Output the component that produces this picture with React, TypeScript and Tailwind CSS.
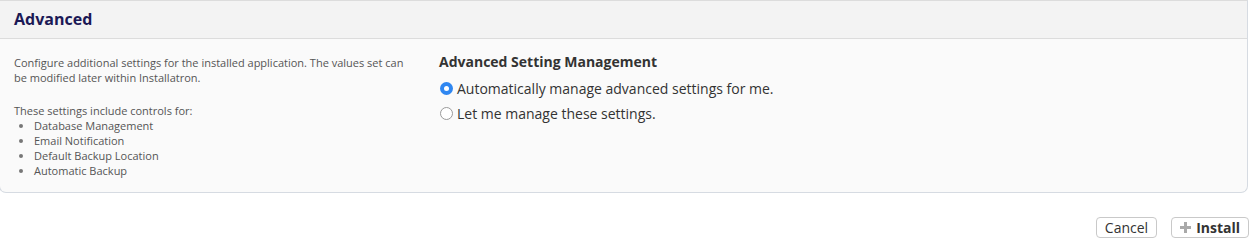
import React from "react";

export default function App() {
  return (
    <div
      className="w-[1256px] h-[248px] bg-white overflow-hidden"
      style={{ fontFamily: '"Open Sans", "Noto Sans", sans-serif' }}
    >
      <div className="w-[1249px] -ml-px border border-[#d6dbe2] border-t-[#dcdcdc] rounded-b-[7px] bg-[#fafafa]">
        <div className="h-[38px] bg-[#f3f3f3] border-b border-[#dcdcdc] pl-[14px] pt-[6px]">
          <h2 className="text-[16px] font-bold text-[#1b1956] leading-[24px]">Advanced</h2>
        </div>
        <div className="flex pb-[14px]">
          <div className="w-[424px] pl-[14px] pt-[16px] text-[11px] leading-[15px] text-[#555]">
            <p className="w-[400px]">
              Configure additional settings for the installed application. The values set can be modified later within Installatron.
            </p>
            <p className="mt-[18px]">These settings include controls for:</p>
            <ul className="list-disc pl-[20px] marker:text-[#777]">
              <li>Database Management</li>
              <li>Email Notification</li>
              <li>Default Backup Location</li>
              <li>Automatic Backup</li>
            </ul>
          </div>
          <div className="pl-[15px] pt-[13px] text-[#333]">
            <h3 className="text-[14px] font-bold leading-[20px]">Advanced Setting Management</h3>
            <label className="flex items-center mt-[4px] h-[25px] text-[14px]">
              <span className="w-[13px] h-[13px] mr-[4px] ml-px rounded-full bg-[#2f87f1] flex items-center justify-center">
                <span className="w-[5px] h-[5px] rounded-full bg-white" />
              </span>
              Automatically manage advanced settings for me.
            </label>
            <label className="flex items-center h-[25px] text-[14px]">
              <span className="w-[13px] h-[13px] mr-[4px] ml-px rounded-full border border-[#9a9a9a] bg-white" />
              Let me manage these settings.
            </label>
          </div>
        </div>
      </div>
      <div className="flex justify-end gap-[14px] pr-[7px] pt-[24px]">
        <button className="h-[21px] px-[8px] border border-[#c9c9c9] rounded-[4px] bg-white text-[14px] leading-[19px] text-[#333]">
          Cancel
        </button>
        <button className="h-[21px] px-[8px] border border-[#c9c9c9] rounded-[4px] bg-white text-[14px] leading-[19px] font-bold text-[#333] flex items-center gap-[5px]">
          <svg width="11" height="11" viewBox="0 0 11 11">
            <rect x="4" y="0" width="3" height="11" fill="#a9a9a9" />
            <rect x="0" y="4" width="11" height="3" fill="#a9a9a9" />
          </svg>
          Install
        </button>
      </div>
    </div>
  );
}
